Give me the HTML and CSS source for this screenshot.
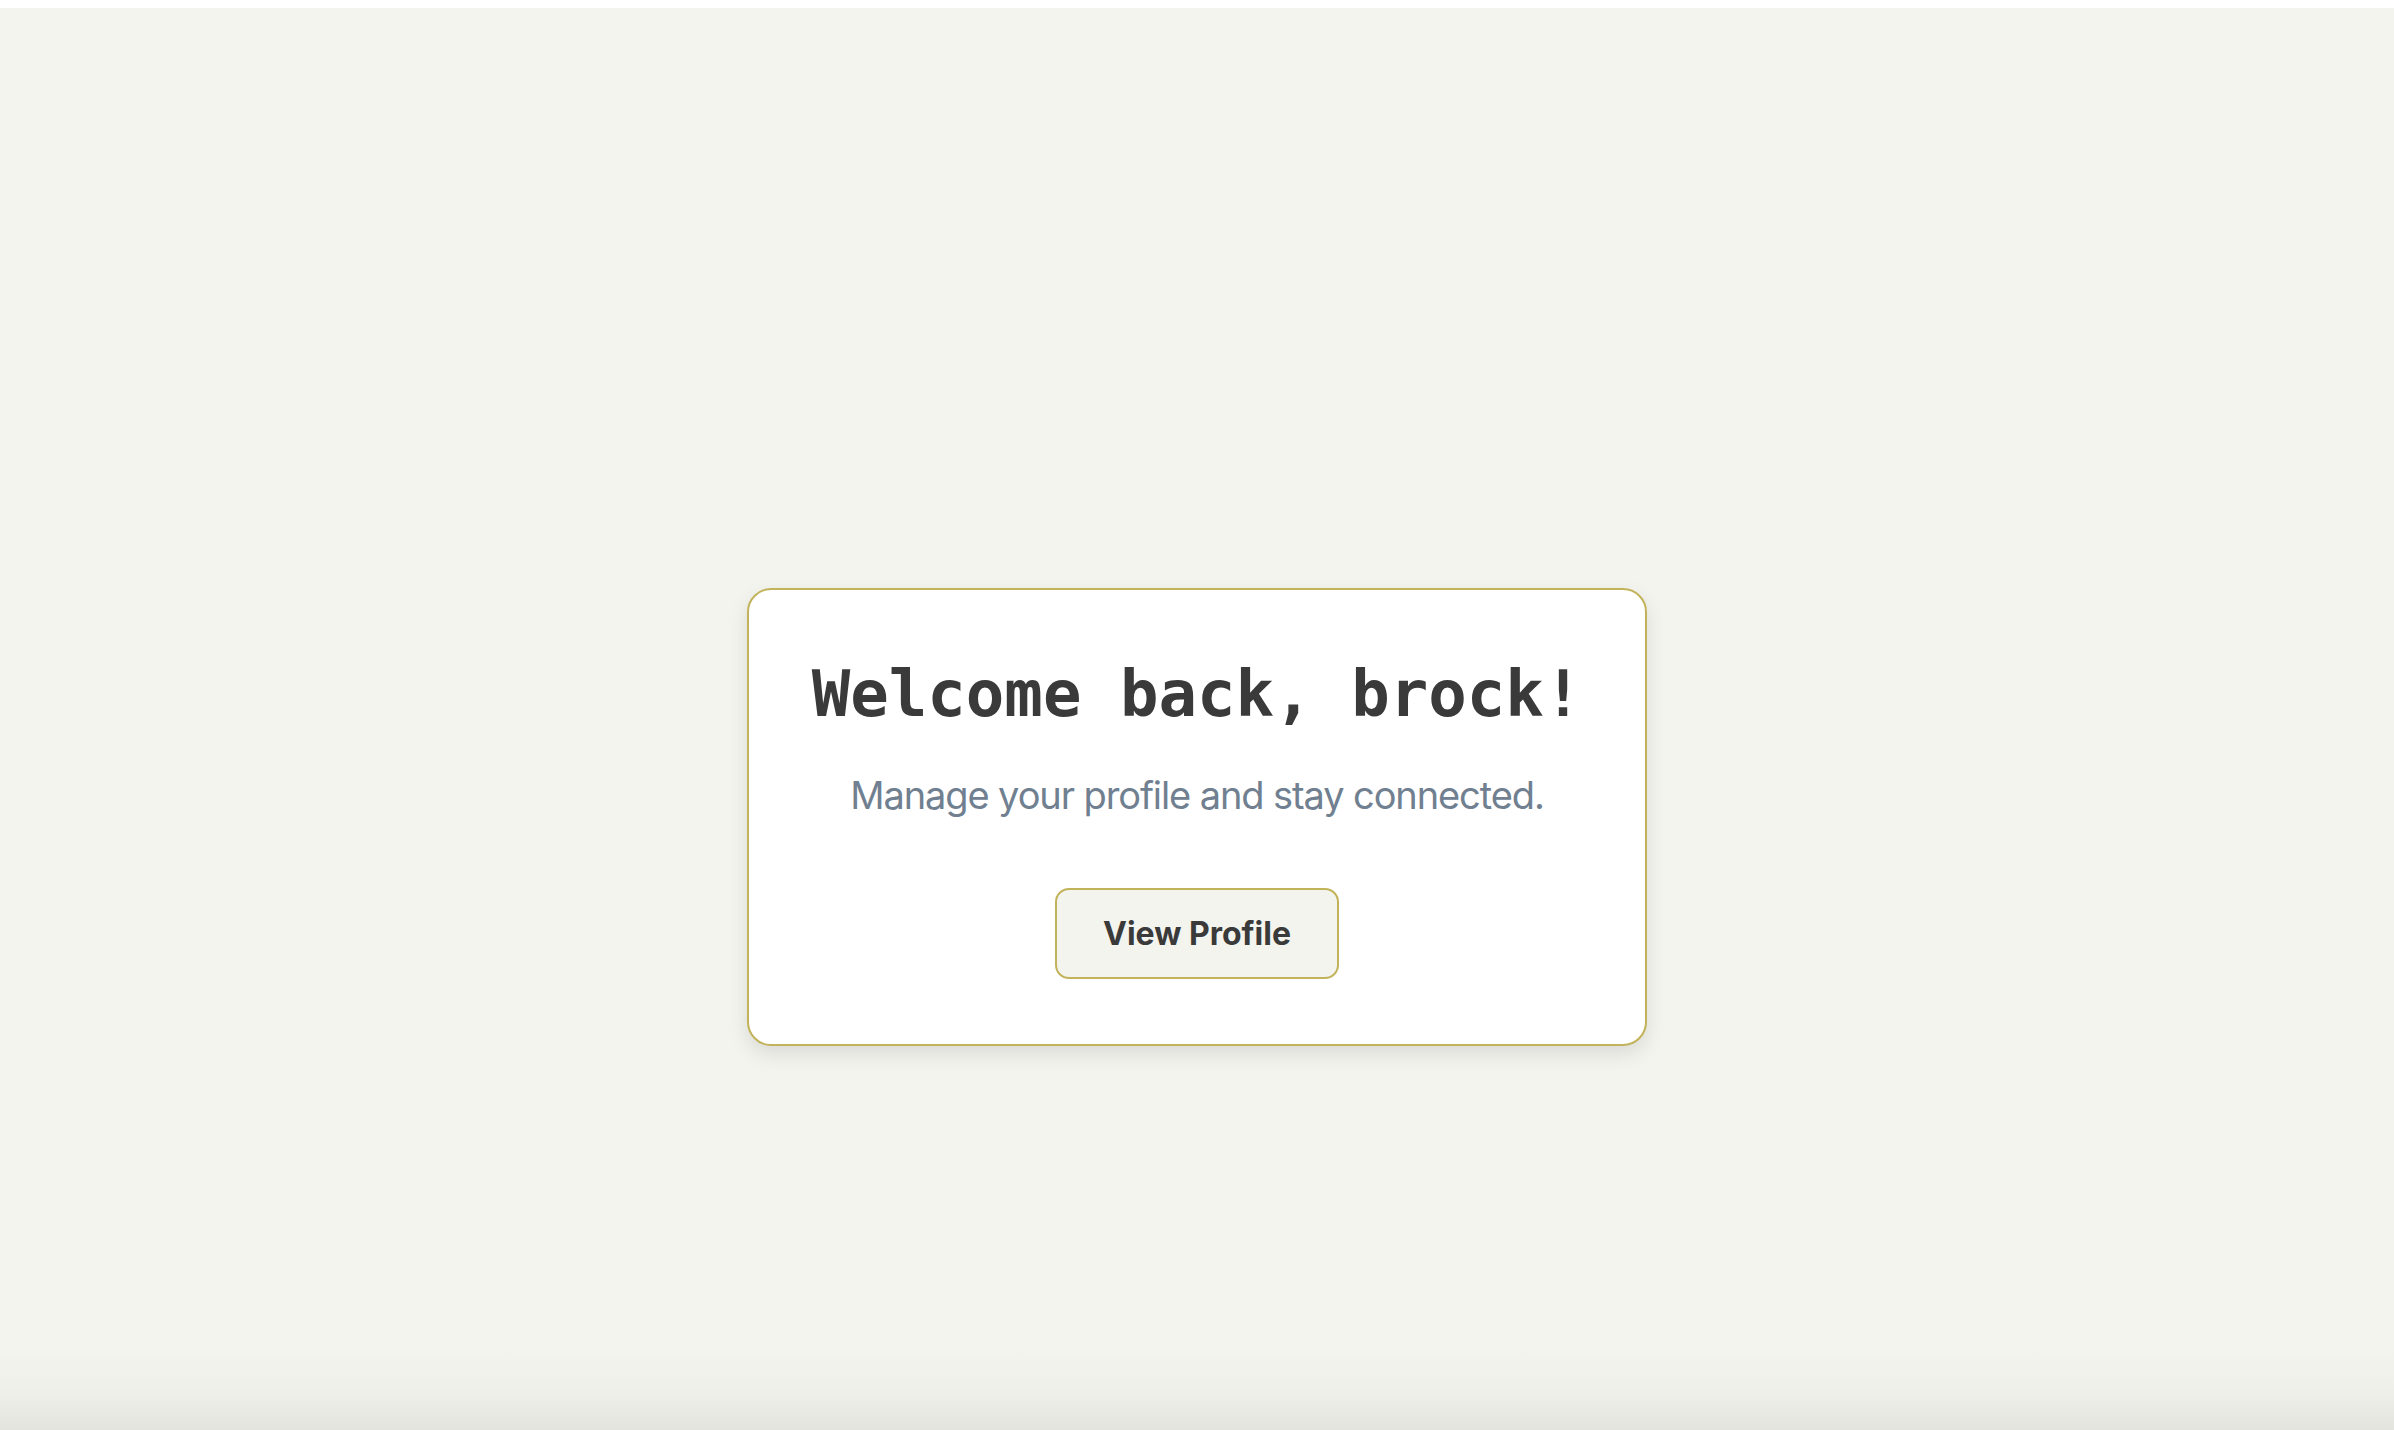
FILE: index.html
```html
<!DOCTYPE html>
<html lang="en">
<head>
<meta charset="utf-8">
<title>Welcome</title>
<link rel="stylesheet" href="styles.css">
</head>
<body>
<div class="page">
  <main class="stage">
    <section class="card">
      <h1 class="title">Welcome back, brock!</h1>
      <p class="subtitle">Manage your profile and stay connected.</p>
      <button class="btn" type="button">View Profile</button>
    </section>
  </main>
</div>
</body>
</html>
```
FILE: styles.css
```css
html, body {
  margin: 0;
  padding: 0;
  background: #ffffff;
}
.page {
  margin-top: 8px;
  height: 1422px;
  background: linear-gradient(to bottom, #f3f4ee 0, #f3f4ee 1340px, #eeefe9 1385px, #e3e4dd 1422px);
  font-family: Inter, "Noto Sans", sans-serif;
  overflow: hidden;
}
.stage {
  display: flex;
  justify-content: center;
  padding-top: 580px;
}
.card {
  box-sizing: border-box;
  width: 900px;
  height: 458px;
  background: #ffffff;
  border: 2px solid #c2b35a;
  border-radius: 24px;
  box-shadow: 0 8px 20px rgba(0, 0, 0, 0.10);
  display: flex;
  flex-direction: column;
  align-items: center;
  padding-top: 66px;
}
.title {
  margin: 0;
  font-family: "DejaVu Sans Mono", "Liberation Mono", monospace;
  font-weight: 700;
  font-size: 64px;
  line-height: 1.2;
  color: #3a3a3a;
}
.subtitle {
  margin: 38px 0 0;
  font-size: 38px;
  letter-spacing: -1.1px;
  line-height: 1.3;
  color: #708090;
}
.btn {
  margin-top: 68px;
  box-sizing: border-box;
  width: 284px;
  height: 91px;
  background: #f3f4ee;
  border: 2px solid #c2b35a;
  border-radius: 14px;
  font-family: Inter, "Noto Sans", sans-serif;
  font-weight: 700;
  font-size: 32px;
  color: #3a3a3a;
  cursor: pointer;
}
```
